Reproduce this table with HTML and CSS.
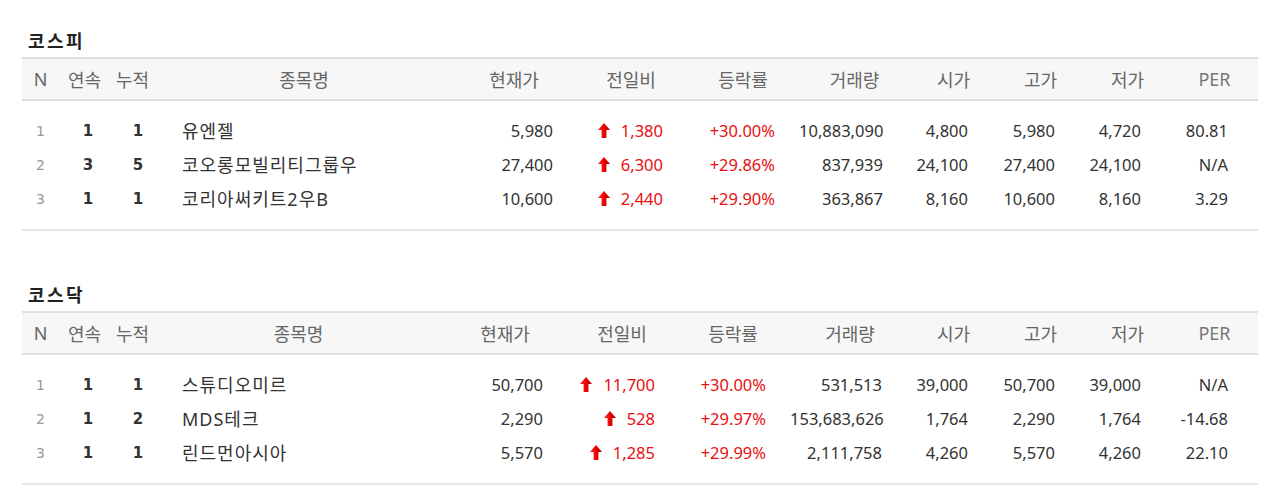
FILE: index.html
```html
<!DOCTYPE html>
<html lang="ko">
<head>
<meta charset="utf-8">
<title>상한가</title>
<link rel="stylesheet" href="styles.css">
</head>
<body>
<svg width="0" height="0" class="defs" aria-hidden="true">
  <defs>
    <linearGradient id="upg" x1="0" y1="0" x2="1" y2="0">
      <stop offset="0" stop-color="#ff2a2a"/>
      <stop offset="0.55" stop-color="#e80000"/>
      <stop offset="1" stop-color="#a80000"/>
    </linearGradient>
  </defs>
</svg>
<div class="page">
  <section class="market">
    <h2 class="market-title">코스피</h2>
    <table class="rank t-kospi">
      <colgroup>
        <col class="c-n"><col class="c-seq"><col class="c-acc"><col class="c-name"><col class="c-price"><col class="c-diff"><col class="c-rate"><col class="c-vol"><col class="c-open"><col class="c-high"><col class="c-low"><col class="c-per">
      </colgroup>
      <thead>
        <tr><th>N</th><th>연속</th><th>누적</th><th>종목명</th><th>현재가</th><th>전일비</th><th>등락률</th><th>거래량</th><th>시가</th><th>고가</th><th>저가</th><th class="per">PER</th></tr>
      </thead>
      <tbody>
        <tr><td class="n">1</td><td class="seq">1</td><td class="acc">1</td><td class="name">유엔젤</td><td class="num price">5,980</td><td class="num diff up"><svg class="arrow" viewBox="0 0 12 15" width="12" height="15"><path d="M6 0 L12 7 H8.4 V15 H3.6 V7 H0 Z" fill="url(#upg)"/></svg>1,380</td><td class="num rate up">+30.00%</td><td class="num vol">10,883,090</td><td class="num">4,800</td><td class="num">5,980</td><td class="num low">4,720</td><td class="num low">80.81</td></tr>
        <tr><td class="n">2</td><td class="seq">3</td><td class="acc">5</td><td class="name">코오롱모빌리티그룹우</td><td class="num price">27,400</td><td class="num diff up"><svg class="arrow" viewBox="0 0 12 15" width="12" height="15"><path d="M6 0 L12 7 H8.4 V15 H3.6 V7 H0 Z" fill="url(#upg)"/></svg>6,300</td><td class="num rate up">+29.86%</td><td class="num vol">837,939</td><td class="num">24,100</td><td class="num">27,400</td><td class="num low">24,100</td><td class="num low">N/A</td></tr>
        <tr><td class="n">3</td><td class="seq">1</td><td class="acc">1</td><td class="name">코리아써키트2우B</td><td class="num price">10,600</td><td class="num diff up"><svg class="arrow" viewBox="0 0 12 15" width="12" height="15"><path d="M6 0 L12 7 H8.4 V15 H3.6 V7 H0 Z" fill="url(#upg)"/></svg>2,440</td><td class="num rate up">+29.90%</td><td class="num vol">363,867</td><td class="num">8,160</td><td class="num">10,600</td><td class="num low">8,160</td><td class="num low">3.29</td></tr>
      </tbody>
    </table>
  </section>

  <section class="market market-second">
    <h2 class="market-title">코스닥</h2>
    <table class="rank t-kosdaq">
      <colgroup>
        <col class="c-n"><col class="c-seq"><col class="c-acc"><col class="c-name"><col class="c-price"><col class="c-diff"><col class="c-rate"><col class="c-vol"><col class="c-open"><col class="c-high"><col class="c-low"><col class="c-per">
      </colgroup>
      <thead>
        <tr><th>N</th><th>연속</th><th>누적</th><th>종목명</th><th>현재가</th><th>전일비</th><th>등락률</th><th>거래량</th><th>시가</th><th>고가</th><th>저가</th><th class="per">PER</th></tr>
      </thead>
      <tbody>
        <tr><td class="n">1</td><td class="seq">1</td><td class="acc">1</td><td class="name">스튜디오미르</td><td class="num price">50,700</td><td class="num diff up"><svg class="arrow" viewBox="0 0 12 15" width="12" height="15"><path d="M6 0 L12 7 H8.4 V15 H3.6 V7 H0 Z" fill="url(#upg)"/></svg>11,700</td><td class="num rate up">+30.00%</td><td class="num vol">531,513</td><td class="num">39,000</td><td class="num">50,700</td><td class="num low">39,000</td><td class="num low">N/A</td></tr>
        <tr><td class="n">2</td><td class="seq">1</td><td class="acc">2</td><td class="name">MDS테크</td><td class="num price">2,290</td><td class="num diff up"><svg class="arrow" viewBox="0 0 12 15" width="12" height="15"><path d="M6 0 L12 7 H8.4 V15 H3.6 V7 H0 Z" fill="url(#upg)"/></svg>528</td><td class="num rate up">+29.97%</td><td class="num vol">153,683,626</td><td class="num">1,764</td><td class="num">2,290</td><td class="num low">1,764</td><td class="num low">-14.68</td></tr>
        <tr><td class="n">3</td><td class="seq">1</td><td class="acc">1</td><td class="name">린드먼아시아</td><td class="num price">5,570</td><td class="num diff up"><svg class="arrow" viewBox="0 0 12 15" width="12" height="15"><path d="M6 0 L12 7 H8.4 V15 H3.6 V7 H0 Z" fill="url(#upg)"/></svg>1,285</td><td class="num rate up">+29.99%</td><td class="num vol">2,111,758</td><td class="num">4,260</td><td class="num">5,570</td><td class="num low">4,260</td><td class="num low">22.10</td></tr>
      </tbody>
    </table>
  </section>
</div>
</body>
</html>
```

FILE: styles.css
```css
html, body {
  margin: 0;
  padding: 0;
  background: #ffffff;
}

body {
  font-family: "Noto Sans", "Noto Sans CJK KR", sans-serif;
  color: #333333;
}

.defs {
  position: absolute;
  width: 0;
  height: 0;
  overflow: hidden;
}

.page {
  padding: 30px 0 0 22px;
  width: 1236px;
}

.market-second {
  margin-top: 53px;
}

.market-title {
  margin: 0 0 7px 0;
  padding-left: 6px;
  font-family: "Noto Sans CJK KR", sans-serif;
  font-size: 18px;
  line-height: 20px;
  letter-spacing: 2.5px;
  font-weight: 700;
  color: #222222;
}

.rank {
  width: 1236px;
  table-layout: fixed;
  border-collapse: collapse;
  border-spacing: 0;
  border-bottom: 2px solid #e6e6e6;
}

.rank th {
  height: 40px;
  padding: 0;
  background: #f7f7f7;
  border-top: 2px solid #e0e0e0;
  border-bottom: 2px solid #e0e0e0;
  font-family: "Noto Sans", "Noto Sans CJK KR", sans-serif;
  font-size: 18px;
  font-weight: 400;
  color: #666666;
  text-align: center;
  white-space: nowrap;
}

.rank th.per {
  color: #777777;
}

.rank td {
  height: 34px;
  padding: 0;
  line-height: 34px;
  font-size: 16.5px;
  white-space: nowrap;
  color: #333333;
}

.rank tbody tr:first-child td {
  padding-top: 13px;
}

.rank tbody tr:last-child td {
  padding-bottom: 13px;
}

.rank td.n {
  text-align: center;
  font-family: "DejaVu Sans", sans-serif;
  font-size: 14px;
  color: #999999;
}

.rank td.seq,
.rank td.acc {
  text-align: center;
  font-family: "DejaVu Sans", sans-serif;
  font-size: 15px;
  font-weight: 700;
  color: #333333;
}

.rank td.seq {
  padding-left: 7px;
}

.rank td.acc {
  padding-left: 11px;
}

.rank td.name {
  padding-left: 27px;
  font-family: "Noto Sans", "Noto Sans CJK KR", sans-serif;
  font-size: 18px;
  letter-spacing: 1px;
  color: #333333;
}

.rank td.num {
  text-align: right;
  padding-right: 29px;
}

.rank td.low {
  padding-right: 30px;
}

.rank td.up {
  color: #e80f0f;
}

.arrow {
  display: inline-block;
  margin-right: 11px;
  vertical-align: -1px;
}

/* column widths: 코스피 */
.t-kospi .c-n { width: 37px; }
.t-kospi .c-seq { width: 51px; }
.t-kospi .c-acc { width: 45px; }
.t-kospi .c-name { width: 298px; }
.t-kospi .c-price { width: 122px; }
.t-kospi .c-diff { width: 112px; }
.t-kospi .c-rate { width: 112px; }
.t-kospi .c-vol { width: 111px; }
.t-kospi .c-open,
.t-kospi .c-high,
.t-kospi .c-low,
.t-kospi .c-per { width: 87px; }

.t-kospi td.price { padding-right: 22px; }
.t-kospi td.diff { padding-right: 24px; }
.t-kospi td.rate { padding-right: 24px; }
.t-kospi td.vol { padding-right: 27px; }

/* column widths: 코스닥 */
.t-kosdaq .c-n { width: 37px; }
.t-kosdaq .c-seq { width: 51px; }
.t-kosdaq .c-acc { width: 45px; }
.t-kosdaq .c-name { width: 287px; }
.t-kosdaq .c-price { width: 126px; }
.t-kosdaq .c-diff { width: 108px; }
.t-kosdaq .c-rate { width: 114px; }
.t-kosdaq .c-vol { width: 120px; }
.t-kosdaq .c-open,
.t-kosdaq .c-high,
.t-kosdaq .c-low,
.t-kosdaq .c-per { width: 87px; }

.t-kosdaq td.price { padding-right: 25px; }
.t-kosdaq td.diff { padding-right: 21px; }
.t-kosdaq td.rate { padding-right: 24px; }
.t-kosdaq td.vol { padding-right: 28px; }
```
